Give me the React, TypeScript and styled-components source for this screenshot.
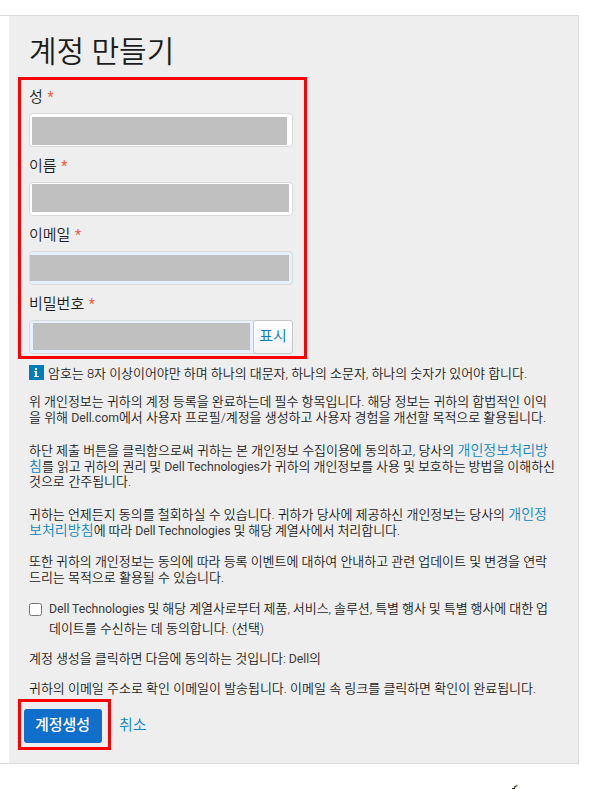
import React from "react";
import styled, { createGlobalStyle } from "styled-components";

const GlobalStyle = createGlobalStyle`
  * { box-sizing: border-box; }
  body {
    margin: 0;
    background: #fff;
    color: #1c1c1c;
    font-family: Roboto, "Noto Sans CJK KR", sans-serif;
    font-size: 13px;
    font-weight: 350;
  }
`;

const Page = styled.div`
  height: 789px;
  padding-top: 15px;
  overflow: hidden;
`;

const Shell = styled.div`
  width: 579px;
  height: 749px;
  padding-left: 9px;
  border: solid #d9dadb;
  border-width: 1px 1px 1px 0;
`;

const Panel = styled.main`
  display: flow-root;
  height: 747px;
  background: #eee;
  padding: 0 20px;
`;

const Title = styled.h1`
  margin: 11px 0 10px;
  height: 40px;
  line-height: 49px;
  font-size: 30px;
  font-weight: 350;
`;

const Highlight = styled.div`
  border: 3px solid #f00;
`;

const FieldsBox = styled(Highlight)`
  display: flex;
  flex-direction: column;
  gap: 2px;
  width: 289px;
  height: 282px;
  margin-left: -11px;
  padding-left: 8px;
`;

const Label = styled.label`
  display: block;
  height: 33px;
  line-height: 35px;
  font-size: 15px;
  word-spacing: 1px;
`;

const Required = styled.span`
  color: #f1593a;
  font-size: 14px;
  font-weight: 400;
`;

const InputBox = styled.div<{ $pad: string; $filled?: boolean }>`
  display: flex;
  width: 264px;
  height: 34px;
  padding: ${(p) => p.$pad};
  border: 1px solid #d9dadb;
  border-radius: 4px;
  background: ${(p) => (p.$filled ? "#e8f0fe" : "#fff")};
`;

const Mask = styled.div`
  flex: 1;
  background: #c0c0c0;
`;

const PasswordMask = styled(Mask)`
  margin: 2px 0 3px;
`;

const ShowButton = styled.button`
  width: 40px;
  height: 34px;
  margin: -1px -1px 0 3px;
  padding: 0 0 3px;
  border: 1px solid #c8c9ca;
  border-radius: 3px;
  background: linear-gradient(#fff, #f3f3f4);
  color: #007db8;
  font: 350 15px/24px Roboto, "Noto Sans CJK KR", sans-serif;
`;

const Info = styled.div`
  display: flex;
  align-items: flex-start;
  gap: 4px;
  height: 17px;
  margin-top: 6px;
  white-space: nowrap;
`;

const InfoText = styled.div`
  padding-top: 1px;
`;

const Paragraph = styled.p<{ $gap: number }>`
  margin: ${(p) => p.$gap}px 0 0;
  line-height: 16px;
`;

const Line = styled.span<{ $width?: number; $tall?: boolean }>`
  display: block;
  height: ${(p) => (p.$tall ? 20 : 16)}px;
  line-height: ${(p) => (p.$tall ? 20 : 16)}px;
  white-space: nowrap;
  letter-spacing: -0.05px;
  word-spacing: -0.45px;
  width: ${(p) => (p.$width ? `${p.$width}px` : "auto")};
  text-align-last: ${(p) => (p.$width ? "justify" : "auto")};
`;

const Latin = styled.span`
  color: #3a3a3a;
  font-size: 12.3px;
  font-weight: 400;
`;

const Link = styled.a`
  color: #0d86bd;
  font-size: 14px;
  letter-spacing: 0.05px;
`;

const Consent = styled.label`
  display: flex;
  gap: 7px;
  margin-top: 13px;
`;

const Check = styled.input`
  width: 13px;
  height: 13px;
  margin: 4px 0 0;
`;

const Actions = styled.div`
  display: flex;
  align-items: center;
  gap: 8px;
  margin: 2px 0 0 -11px;
`;

const SubmitBox = styled(Highlight)`
  width: 93px;
  height: 51px;
  padding: 7px 3px 0;
`;

const Submit = styled.button`
  width: 78px;
  height: 34px;
  padding: 0 1px 3px 0;
  border: 0;
  border-radius: 3px;
  background: #0f6fcb;
  color: #fff;
  font: 500 15px/24px Roboto, "Noto Sans CJK KR", sans-serif;
`;

const Cancel = styled.a`
  padding-bottom: 2px;
  color: #0d86bd;
  font-size: 15px;
`;

const Speck = styled.svg`
  display: block;
  margin: 20px 0 0 510px;
`;

const fields = [
  { label: "성", pad: "3px 5px 1px 2px" },
  { label: "이름", pad: "1px 3px 3px 2px" },
  { label: "이메일", pad: "3px 3px 3px 0", filled: true },
];

export default function App() {
  return (
    <Page>
      <GlobalStyle />
      <Shell>
        <Panel>
          <Title>계정 만들기</Title>
          <FieldsBox>
            {fields.map((f) => (
              <div key={f.label}>
                <Label>{f.label} <Required>*</Required></Label>
                <InputBox $pad={f.pad} $filled={f.filled}><Mask /></InputBox>
              </div>
            ))}
            <div>
              <Label>비밀번호 <Required>*</Required></Label>
              <InputBox $pad="0 0 0 3px" $filled>
                <PasswordMask />
                <ShowButton>표시</ShowButton>
              </InputBox>
            </div>
          </FieldsBox>
          <Info>
            <svg width="15" height="15" viewBox="0 0 15 15" shapeRendering="crispEdges">
              <path fill="#007db8" d="M0 0h15v15H0z" />
              <path fill="#fff" d="M6 3h2v2H6zM5 6h3v5h2v1H5v-1h1V7H5z" />
            </svg>
            <InfoText>
              <Line $width={479}>암호는 8자 이상이어야만 하며 하나의 대문자, 하나의 소문자, 하나의 숫자가 있어야 합니다.</Line>
            </InfoText>
          </Info>
          <Paragraph $gap={12}>
            <Line $width={518}>위 개인정보는 귀하의 계정 등록을 완료하는데 필수 항목입니다. 해당 정보는 귀하의 합법적인 이익</Line>
            <Line $width={517}>을 위해 <Latin>Dell.com</Latin>에서 사용자 프로필/계정을 생성하고 사용자 경험을 개선할 목적으로 활용됩니다.</Line>
          </Paragraph>
          <Paragraph $gap={16}>
            <Line $width={519}>하단 제출 버튼을 클릭함으로써 귀하는 본 개인정보 수집이용에 동의하고, 당사의 <Link>개인정보처리방</Link></Line>
            <Line $width={526}><Link>침</Link>를 읽고 귀하의 권리 및 <Latin>Dell Technologies</Latin>가 귀하의 개인정보를 사용 및 보호하는 방법을 이해하신</Line>
            <Line $width={102}>것으로 간주됩니다.</Line>
          </Paragraph>
          <Paragraph $gap={16}>
            <Line $width={518}>귀하는 언제든지 동의를 철회하실 수 있습니다. 귀하가 당사에 제공하신 개인정보는 당사의 <Link>개인정</Link></Line>
            <Line $width={371}><Link>보처리방침</Link>에 따라 <Latin>Dell Technologies</Latin> 및 해당 계열사에서 처리합니다.</Line>
          </Paragraph>
          <Paragraph $gap={16}>
            <Line $width={518}>또한 귀하의 개인정보는 동의에 따라 등록 이벤트에 대하여 안내하고 관련 업데이트 및 변경을 연락</Line>
            <Line $width={195}>드리는 목적으로 활용될 수 있습니다.</Line>
          </Paragraph>
          <Consent>
            <Check type="checkbox" />
            <span>
              <Line $tall $width={499}><Latin>Dell Technologies</Latin> 및 해당 계열사로부터 제품, 서비스, 솔루션, 특별 행사 및 특별 행사에 대한 업</Line>
              <Line $tall $width={215}>데이트를 수신하는 데 동의합니다. (선택)</Line>
            </span>
          </Consent>
          <Paragraph $gap={12}><Line $width={292}>계정 생성을 클릭하면 다음에 동의하는 것입니다: <Latin>Dell</Latin>의</Line></Paragraph>
          <Paragraph $gap={14}><Line $width={507}>귀하의 이메일 주소로 확인 이메일이 발송됩니다. 이메일 속 링크를 클릭하면 확인이 완료됩니다.</Line></Paragraph>
          <Actions>
            <SubmitBox><Submit>계정생성</Submit></SubmitBox>
            <Cancel>취소</Cancel>
          </Actions>
        </Panel>
      </Shell>
      <Speck width="9" height="5" viewBox="0 0 9 5">
        <path d="M2 4.5h3M4 3.5l3-2" stroke="#292a25" strokeWidth="1.2" />
        <path d="M6 .5h2v2H7z" fill="#e2ca77" />
      </Speck>
    </Page>
  );
}
